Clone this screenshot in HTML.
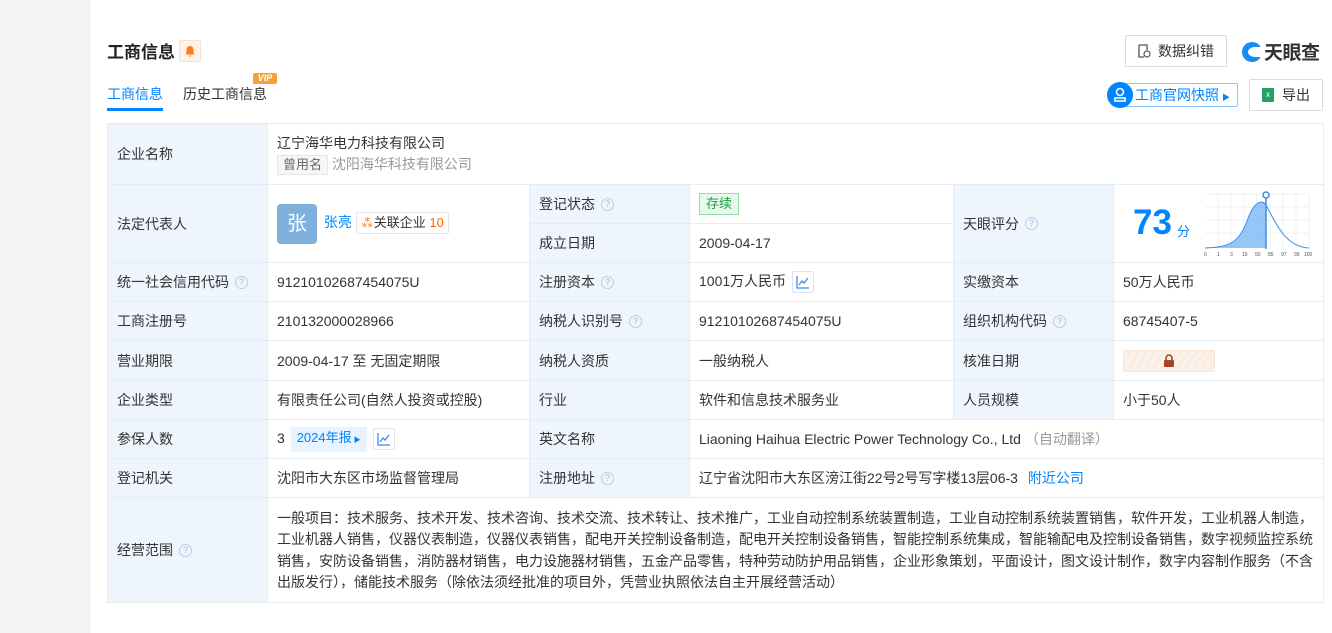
<!DOCTYPE html>
<html><head><meta charset="utf-8"><style>
*{box-sizing:border-box;margin:0;padding:0}
body{width:1332px;height:633px;overflow:hidden;background:#fff;font-family:"Liberation Sans","Noto Sans CJK SC",sans-serif;color:#333;font-size:14px;position:relative}
.side{position:absolute;left:0;top:0;width:90px;height:633px;background:#f5f5f5;border-right:1px solid #ececec}
.abs{position:absolute}
table{position:absolute;left:107px;top:123px;border-collapse:collapse;table-layout:fixed;width:1216px}
td{border:1px solid #e4ecf6;padding:0 9px;vertical-align:middle;line-height:20px}
td.l{background:#eef5fd;color:#333}
.q{display:inline-block;width:13px;height:13px;border:1px solid #b9cde6;border-radius:50%;color:#9fbbdf;font-size:9px;line-height:11px;text-align:center;margin-left:6px;vertical-align:middle;position:relative;top:-1px}
.tag{display:inline-block;border:1px solid #e6e6e6;background:#f6f6f6;color:#666;font-size:13px;padding:0 5px;line-height:18px}
.chart{display:inline-block;width:22px;height:22px;border:1px solid #dde3ec;border-radius:2px;vertical-align:middle;margin-left:6px;text-align:center}
.blue{color:#0084ff}
</style></head><body>
<div class="side"></div>
<div class="abs" style="left:107px;top:38px;font-size:17px;font-weight:bold;color:#222">工商信息</div>
<div class="abs" style="left:179px;top:40px;width:22px;height:22px;background:#fff3e8;border:1px solid #fde0c6;border-radius:2px"><svg width="20" height="20" viewBox="0 0 20 20"><path d="M10 5c-2.3 0-3.5 1.8-3.5 4v3l-1 1.5h9l-1-1.5V9c0-2.2-1.2-4-3.5-4z M8.8 14.5h2.4a1.2 1.2 0 0 1-2.4 0z" fill="#ff7a1a"/></svg></div>
<div class="abs" style="left:107px;top:84px;font-size:14px;color:#0084ff">工商信息</div>
<div class="abs" style="left:107px;top:108px;width:56px;height:3px;background:#0084ff"></div>
<div class="abs" style="left:183px;top:84px;font-size:14px;color:#333">历史工商信息</div>
<div class="abs" style="left:253px;top:73px;width:24px;height:11px;background:#f4a13a;border-radius:2px 2px 2px 0;color:#fff;font-size:9px;font-weight:bold;font-style:italic;line-height:11px;text-align:center">VIP</div>
<div class="abs" style="left:1125px;top:35px;width:102px;height:32px;border:1px solid #dcdcdc;border-radius:2px;font-size:14px;line-height:30px;padding-left:32px;color:#333">数据纠错<svg class="abs" style="left:11px;top:8px" width="14" height="15" viewBox="0 0 14 15"><path d="M2 1h8v5M2 1v12h5" fill="none" stroke="#555" stroke-width="1.3"/><circle cx="10" cy="10" r="3" fill="none" stroke="#555" stroke-width="1.2"/></svg></div>
<div class="abs" style="left:1242px;top:38px;font-size:19px;font-weight:bold;color:#333;letter-spacing:-0.5px"><span style="display:inline-block;width:20px;height:20px;border-radius:50%;background:#1a8bf0;vertical-align:-3px;margin-right:2px;position:relative"><span style="position:absolute;left:6px;top:5px;width:14px;height:10px;background:#fff;border-radius:50% 0 0 50%"></span></span>天眼查</div>
<div class="abs" style="left:1116px;top:83px;width:122px;height:24px;border:1px solid #8cc4ff;border-left:none;border-radius:2px;color:#0084ff;font-size:14px;line-height:22px;padding-left:19px">工商官网快照<span style="font-size:8px;margin-left:3px">▶</span></div>
<div class="abs" style="left:1107px;top:82px;width:26px;height:26px;border-radius:50%;background:#0084ff"><svg width="26" height="26" viewBox="0 0 26 26"><circle cx="13" cy="10" r="3.5" fill="none" stroke="#fff" stroke-width="1.6"/><path d="M8 19h10v-3h-10z" fill="none" stroke="#fff" stroke-width="1.6"/></svg></div>
<div class="abs" style="left:1249px;top:79px;width:74px;height:32px;border:1px solid #dcdcdc;border-radius:2px;font-size:14px;line-height:30px;padding-left:32px">导出<span class="abs" style="left:12px;top:8px;width:12px;height:14px;background:#21a366;border-radius:1px;color:#fff;font-size:8px;line-height:14px;text-align:center">x</span></div>

<table>
<colgroup><col style="width:160px"><col style="width:262px"><col style="width:160px"><col style="width:264px"><col style="width:160px"><col style="width:210px"></colgroup>
<tr style="height:61px"><td class="l">企业名称</td><td colspan="5"><div>辽宁海华电力科技有限公司</div><div style="margin-top:1px"><span class="tag">曾用名</span> <span style="color:#999">沈阳海华科技有限公司</span></div></td></tr>
<tr style="height:39px"><td class="l" rowspan="2">法定代表人</td><td rowspan="2"><span style="display:inline-block;width:40px;height:40px;background:#7eb1db;border-radius:4px;color:#fff;font-size:20px;line-height:40px;text-align:center;vertical-align:middle">张</span> <span class="blue" style="margin-left:3px">张亮</span> <span style="display:inline-block;border:1px solid #e6e6e6;border-radius:2px;font-size:13px;padding:0 4px;line-height:20px"><span style="color:#f60">⁂</span>关联企业 <span style="color:#f60">10</span></span></td><td class="l">登记状态<span class="q">?</span></td><td><span style="display:inline-block;background:#e6f9ea;border:1px solid #95e0a8;color:#1a9e46;font-size:13px;padding:0 6px;line-height:20px">存续</span></td><td class="l" rowspan="2">天眼评分<span class="q">?</span></td><td rowspan="2" style="position:relative"><span style="position:absolute;left:19px;top:18px;font-size:35px;font-weight:bold;color:#0084ff;line-height:40px">73</span><span style="position:absolute;left:63px;top:37px;color:#0084ff;font-size:13px">分</span>
<svg style="position:absolute;left:90px;top:6px" width="108" height="66" viewBox="0 0 108 66"><g stroke="#eef0f3" stroke-width="1"><path d="M1 3h104M1 16h104M1 29h104M1 42h104M14 3v55M27 3v55M40 3v55M53 3v55M66 3v55M79 3v55M92 3v55M105 3v55"/></g><path d="M1 57C25 56 35 52 43 30C50 10 58 8 62 14L62 57z" fill="#7ab8f5" opacity=".8"/><path d="M1 57C25 56 35 52 43 30C50 10 58 8 62 14C70 28 80 56 105 57" fill="none" stroke="#3c8ee6" stroke-width="1"/><path d="M62 4v54" stroke="#3c8ee6" stroke-width="1.5"/><circle cx="62" cy="4" r="3" fill="#fff" stroke="#3c8ee6" stroke-width="1.5"/><text y="65" font-size="5" fill="#555" font-family="Liberation Sans"><tspan x="0">0</tspan><tspan x="13">1</tspan><tspan x="26">3</tspan><tspan x="38">15</tspan><tspan x="51">50</tspan><tspan x="64">85</tspan><tspan x="77">97</tspan><tspan x="90">99</tspan><tspan x="100">100</tspan></text></svg></td></tr>
<tr style="height:39px"><td class="l">成立日期</td><td>2009-04-17</td></tr>
<tr style="height:39px"><td class="l">统一社会信用代码<span class="q">?</span></td><td>91210102687454075U</td><td class="l">注册资本<span class="q">?</span></td><td>1001万人民币<span class="chart"><svg width="14" height="14" viewBox="0 0 14 14" style="margin-top:3px"><path d="M1 1v12h12M3 10l3-4 2 2 4-5" fill="none" stroke="#3c8ee6" stroke-width="1.3"/></svg></span></td><td class="l">实缴资本</td><td>50万人民币</td></tr>
<tr style="height:39px"><td class="l">工商注册号</td><td>210132000028966</td><td class="l">纳税人识别号<span class="q">?</span></td><td>91210102687454075U</td><td class="l">组织机构代码<span class="q">?</span></td><td>68745407-5</td></tr>
<tr style="height:40px"><td class="l">营业期限</td><td>2009-04-17 至 无固定期限</td><td class="l">纳税人资质</td><td>一般纳税人</td><td class="l">核准日期</td><td><span style="display:inline-block;width:92px;height:22px;background:repeating-linear-gradient(120deg,#fbf1e8 0 6px,#f5e6da 6px 7px);border:1px solid #f6e4d4;border-radius:2px;vertical-align:middle;text-align:center"><svg width="12" height="14" viewBox="0 0 12 14" style="margin-top:3px"><path d="M3 6V4a3 3 0 0 1 6 0v2" fill="none" stroke="#a9442a" stroke-width="1.6"/><rect x="1" y="6" width="10" height="7" rx="1" fill="#a9442a"/></svg></span></td></tr>
<tr style="height:39px"><td class="l">企业类型</td><td>有限责任公司(自然人投资或控股)</td><td class="l">行业</td><td>软件和信息技术服务业</td><td class="l">人员规模</td><td>小于50人</td></tr>
<tr style="height:39px"><td class="l">参保人数</td><td>3 <span style="display:inline-block;background:#e8f3ff;color:#0084ff;font-size:13px;padding:0 6px;line-height:22px;margin-left:2px;vertical-align:middle">2024年报<span style="font-size:7px;margin-left:2px">▶</span></span><span class="chart"><svg width="14" height="14" viewBox="0 0 14 14" style="margin-top:3px"><path d="M1 1v12h12M3 10l3-4 2 2 4-5" fill="none" stroke="#3c8ee6" stroke-width="1.3"/></svg></span></td><td class="l">英文名称</td><td colspan="3">Liaoning Haihua Electric Power Technology Co., Ltd <span style="color:#999">（自动翻译）</span></td></tr>
<tr style="height:39px"><td class="l">登记机关</td><td>沈阳市大东区市场监督管理局</td><td class="l">注册地址<span class="q">?</span></td><td colspan="3">辽宁省沈阳市大东区滂江街22号2号写字楼13层06-3 <span class="blue" style="margin-left:6px">附近公司</span></td></tr>
<tr style="height:105px"><td class="l">经营范围<span class="q">?</span></td><td colspan="5" style="line-height:21.5px;padding-top:1px;padding-right:4px">一般项目：技术服务、技术开发、技术咨询、技术交流、技术转让、技术推广，工业自动控制系统装置制造，工业自动控制系统装置销售，软件开发，工业机器人制造，工业机器人销售，仪器仪表制造，仪器仪表销售，配电开关控制设备制造，配电开关控制设备销售，智能控制系统集成，智能输配电及控制设备销售，数字视频监控系统销售，安防设备销售，消防器材销售，电力设施器材销售，五金产品零售，特种劳动防护用品销售，企业形象策划，平面设计，图文设计制作，数字内容制作服务（不含出版发行），储能技术服务（除依法须经批准的项目外，凭营业执照依法自主开展经营活动）</td></tr>
</table>
</body></html>
